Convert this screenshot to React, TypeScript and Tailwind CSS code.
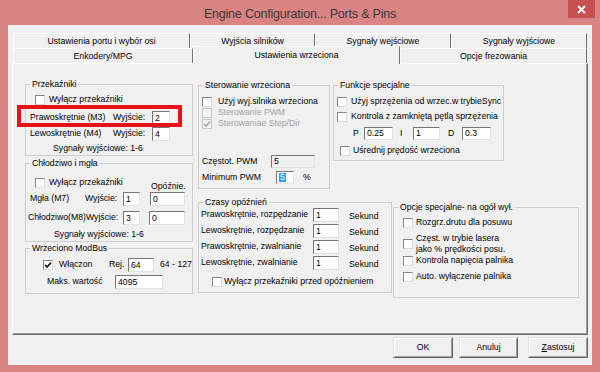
import React from 'react'

type Kids = { className?: string; children?: React.ReactNode }

function Box({ title, className = "", children }: Kids & { title: string }) {
  return (
    <fieldset className={`border border-[#cdcdcd] shrink-0 ${className}`}>
      <legend className="ml-[4px] px-[2px] leading-[10px] whitespace-nowrap">{title}</legend>
      {children}
    </fieldset>
  )
}

function Check({ checked = false, disabled = false }: { checked?: boolean; disabled?: boolean }) {
  const style = disabled
    ? "w-[10px] h-[10px] shrink-0 bg-[#f4f4f4] border border-[#c6c6c6] flex items-center justify-center"
    : "w-[10px] h-[10px] shrink-0 bg-white border border-t-[#858585] border-l-[#858585] border-r-[#dadada] border-b-[#dadada] flex items-center justify-center"
  return (
    <span className={style}>
      {checked && (
        <svg width="8" height="8" viewBox="0 0 8 8">
          <path d="M1 3.8 L3 6 L7 1.6" fill="none" stroke={disabled ? "#a9a9a9" : "#111"} strokeWidth="1.6" />
        </svg>
      )}
    </span>
  )
}

function Field({ className = "", disabled = false, children }: Kids & { disabled?: boolean }) {
  return (
    <span
      className={`shrink-0 flex items-center pl-[2px] leading-none border border-t-[#767676] border-l-[#767676] border-r-[#e2e2e2] border-b-[#e2e2e2] ${disabled ? "bg-[#f0f0f0]" : "bg-white"} ${className}`}
    >
      {children}
    </span>
  )
}

function Tab({ className = "", children }: Kids) {
  return (
    <div className={`h-[15px] shrink-0 flex items-center justify-center leading-none whitespace-nowrap border-t border-l border-r border-t-white border-l-white border-r-[#707070] ${className}`}>
      {children}
    </div>
  )
}

function Btn({ className = "", children }: Kids) {
  return (
    <div className={`h-[21px] border border-t-[#e3e3e3] border-l-[#e3e3e3] border-r-[#646464] border-b-[#646464] ${className}`}>
      <div className="h-full w-full flex items-center justify-center border border-t-white border-l-white border-r-[#a0a0a0] border-b-[#a0a0a0]">
        {children}
      </div>
    </div>
  )
}

const delays = [
  "Prawoskrętnie, rozpędzanie",
  "Lewoskrętnie, rozpędzanie",
  "Prawoskrętnie, zwalnianie",
  "Lewoskrętnie, zwalnianie",
]

export default function App() {
  return (
    <div className="w-[600px] h-[372px] bg-[#d98383] flex flex-col overflow-hidden font-['Liberation_Sans',Arial,sans-serif] text-[8.7px] text-black">
      {/* title bar */}
      <div className="h-[25px] shrink-0 grid grid-cols-[1fr_auto_1fr]">
        <div />
        <div className="text-[12.5px] tracking-[-0.2px] leading-[28px] text-[#3a3a3a]">Engine Configuration... Ports &amp; Pins</div>
        <div className="justify-self-end mr-[5px] w-[27px] h-[18px] bg-[#c75050] flex items-center justify-center">
          <svg width="9" height="9" viewBox="0 0 9 9">
            <path d="M1 1 L8 8 M8 1 L1 8" stroke="#fff" strokeWidth="1.8" />
          </svg>
        </div>
      </div>

      {/* client area */}
      <div className="mx-[8px] h-[340px] shrink-0 bg-[#f0f0f0] flex flex-col px-[4px] pt-[8px]">
        <div className="flex h-[15px] ml-[1px]">
          <Tab className="w-[177px]">Ustawienia portu i wybór osi</Tab>
          <Tab className="w-[125px]">Wyjścia silników</Tab>
          <Tab className="w-[136px]">Sygnały wejściowe</Tab>
          <Tab className="w-[136px]">Sygnały wyjściowe</Tab>
        </div>
        <div className="flex items-end h-[15px] ml-[1px]">
          <Tab className="w-[180px]">Enkodery/MPG</Tab>
          <div className="relative z-10 w-[207px] h-[18px] -mb-[1px] shrink-0 bg-[#f0f0f0] flex items-center justify-center leading-none border-t border-l border-r border-t-white border-l-white border-r-[#707070]">
            Ustawienia wrzeciona
          </div>
          <Tab className="w-[187px]">Opcje frezowania</Tab>
        </div>

        {/* tab page */}
        <div className="h-[272px] shrink-0 border-l border-t border-l-white border-t-white border-r border-b border-r-[#696969] border-b-[#696969]">
          <div className="relative h-full border-r border-b border-r-[#a0a0a0] border-b-[#a0a0a0] flex pl-[12px] pt-[15px]">
            <div className="w-[168px] flex flex-col">
              <Box title="Przekaźniki" className="w-[168px] h-[77px]">
                <div className="mt-[4px] h-[14px] flex items-center pl-[9px] gap-[4px]">
                  <Check />
                  <span>Wyłącz przekaźniki</span>
                </div>
                <div className="mt-[4px] h-[14px] flex items-center pl-[4px]">
                  <span className="w-[83px]">Prawoskrętnie (M3)</span>
                  <span className="w-[39px]">Wyjście:</span>
                  <Field className="w-[18px] h-[14px]">2</Field>
                </div>
                <div className="mt-[2px] h-[14px] flex items-center pl-[4px]">
                  <span className="w-[83px]">Lewoskrętnie (M4)</span>
                  <span className="w-[39px]">Wyjście:</span>
                  <Field className="w-[18px] h-[14px]">4</Field>
                </div>
                <div className="mt-[2px] h-[12px] flex items-center pl-[27px]">Sygnały wyjściowe: 1-6</div>
              </Box>

              <Box title="Chłodziwo i mgła" className="mt-[2px] w-[168px] h-[84px]">
                <div className="mt-[8px] h-[16px] flex items-start pl-[9px]">
                  <div className="w-[116px] h-[14px] flex items-center gap-[4px]">
                    <Check />
                    <span>Wyłącz przekaźniki</span>
                  </div>
                  <span className="mt-[5px] leading-[10px]">Opóźnie.</span>
                </div>
                <div className="h-[14px] flex items-center pl-[4px]">
                  <span className="w-[55px]">Mgła (M7)</span>
                  <span className="w-[38px]">Wyjście:</span>
                  <Field className="w-[17px] h-[14px]">1</Field>
                  <Field className="ml-[10px] w-[35px] h-[14px]">0</Field>
                </div>
                <div className="mt-[5px] h-[14px] flex items-center pl-[2px]">
                  <span className="w-[95px] whitespace-nowrap">Chłodziwo(M8)Wyjście:</span>
                  <Field className="w-[17px] h-[14px]">3</Field>
                  <Field className="ml-[9px] w-[36px] h-[14px]">0</Field>
                </div>
                <div className="mt-[4px] h-[12px] flex items-center pl-[28px]">Sygnały wyjściowe: 1-6</div>
              </Box>

              <Box title="Wrzeciono ModBus" className="mt-[1px] w-[168px] h-[51px]">
                <div className="mt-[5px] h-[14px] flex items-center pl-[17px]">
                  <Check checked />
                  <span className="ml-[6px] w-[50px]">Włączon</span>
                  <span className="w-[19px]">Rej.</span>
                  <Field className="w-[26px] h-[14px]">64</Field>
                  <span className="ml-[6px]">64 - 127</span>
                </div>
                <div className="mt-[3px] h-[14px] flex items-center pl-[21px]">
                  <span className="w-[68px]">Maks. wartość</span>
                  <Field className="w-[48px] h-[14px]">4095</Field>
                </div>
              </Box>
            </div>

            <div className="ml-[5px] mt-[1px] flex flex-col">
              <div className="flex items-start">
                <Box title="Sterowanie wrzeciona" className="w-[132px] h-[109px]">
                  <div className="mt-[6px] h-[11px] flex items-center pl-[3px] gap-[6px] whitespace-nowrap">
                    <Check />
                    <span>Użyj wyj.silnika wrzeciona</span>
                  </div>
                  <div className="h-[11px] flex items-center pl-[3px] gap-[6px] text-[#a3a3a3]">
                    <Check disabled />
                    <span>Sterowanie PWM</span>
                  </div>
                  <div className="h-[11px] flex items-center pl-[3px] gap-[6px] text-[#a3a3a3]">
                    <Check disabled checked />
                    <span>Sterowaniae Step/Dir</span>
                  </div>
                  <div className="mt-[26px] h-[13px] flex items-center pl-[3px]">
                    <span className="w-[69px]">Częstot. PWM</span>
                    <Field disabled className="w-[44px] h-[13px]">5</Field>
                  </div>
                  <div className="mt-[3px] h-[13px] flex items-center pl-[3px]">
                    <span className="w-[74px]">Minimum PWM</span>
                    <Field className="w-[18px] h-[13px]">
                      <span className="bg-[#3399ff] text-white px-[1px]">5</span>
                    </Field>
                    <span className="ml-[9px]">%</span>
                  </div>
                </Box>

                <Box title="Funkcje specjalne" className="ml-[3px] w-[171px] h-[81px]">
                  <div className="mt-[6px] h-[12px] flex items-center pl-[3px] gap-[4px] whitespace-nowrap">
                    <Check />
                    <span>Użyj sprzężenia od wrzec.w trybieSync</span>
                  </div>
                  <div className="mt-[3px] h-[12px] flex items-center pl-[3px] gap-[4px] whitespace-nowrap">
                    <Check />
                    <span>Kontrola z zamkniętą pętlą sprzężenia</span>
                  </div>
                  <div className="mt-[4px] h-[13px] flex items-center pl-[19px]">
                    <span className="w-[11px]">P</span>
                    <Field className="w-[29px] h-[13px]">0.25</Field>
                    <span className="ml-[7px] w-[13px]">I</span>
                    <Field className="w-[27px] h-[13px]">1</Field>
                    <span className="ml-[8px] w-[14px]">D</span>
                    <Field className="w-[29px] h-[13px]">0.3</Field>
                  </div>
                  <div className="mt-[5px] h-[12px] flex items-center pl-[6px] gap-[3px]">
                    <Check />
                    <span>Uśrednij prędość wrzeciona</span>
                  </div>
                </Box>
              </div>

              <div className="mt-[8px] flex items-start">
                <Box title="Czasy opóźnień" className="w-[194px] h-[96px]">
                  <div className="mt-[1px] flex flex-col gap-[2px]">
                    {delays.map((label) => (
                      <div key={label} className="h-[14px] flex items-center pl-[2px]">
                        <span className="w-[112px] whitespace-nowrap">{label}</span>
                        <Field className="w-[26px] h-[14px]">1</Field>
                        <span className="ml-[10px] pt-[3px]">Sekund</span>
                      </div>
                    ))}
                  </div>
                  <div className="mt-[6px] h-[12px] flex items-center pl-[13px] gap-[2px] whitespace-nowrap">
                    <Check />
                    <span>Wyłącz przekaźniki przed opóźnieniem</span>
                  </div>
                </Box>

                <Box title="Opcje specjalne- na ogół wył." className="ml-[1px] mt-[5px] w-[186px] h-[96px]">
                  <div className="mt-[5px] h-[12px] flex items-center pl-[9px] gap-[3px]">
                    <Check />
                    <span className="whitespace-nowrap">Rozgrz.drutu dla posuwu</span>
                  </div>
                  <div className="mt-[4px] h-[22px] flex items-center pl-[9px] gap-[3px]">
                    <Check />
                    <span className="leading-[11px] whitespace-nowrap">
                      Częst. w trybie lasera
                      <br />
                      jako % prędkości posu.
                    </span>
                  </div>
                  <div className="h-[12px] flex items-center pl-[9px] gap-[3px]">
                    <Check />
                    <span className="whitespace-nowrap">Kontrola napięcia palnika</span>
                  </div>
                  <div className="mt-[4px] h-[12px] flex items-center pl-[9px] gap-[3px]">
                    <Check />
                    <span className="whitespace-nowrap">Auto. wyłączenie palnika</span>
                  </div>
                </Box>
              </div>
            </div>

            {/* red highlight drawn over the first group */}
            <div className="absolute left-[4px] top-[41px] w-[165px] h-[22px] border-[4px] border-[#e3131b]" />
          </div>
        </div>

        <div className="mt-[2px] flex justify-end">
          <Btn className="w-[60px]">OK</Btn>
          <Btn className="ml-[6px] w-[59px]">Anuluj</Btn>
          <Btn className="ml-[10px] w-[60px]">
            <span className="underline">Z</span>astosuj
          </Btn>
        </div>
      </div>
    </div>
  )
}
